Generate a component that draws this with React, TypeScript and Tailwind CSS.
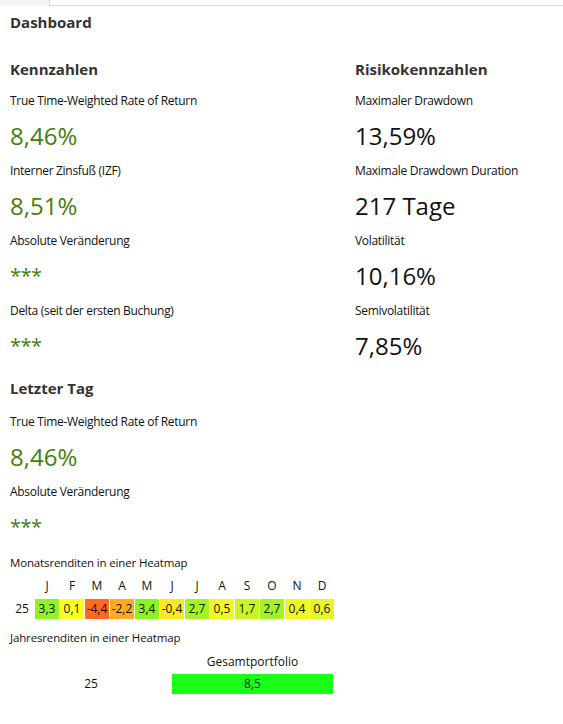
const months = ["J", "F", "M", "A", "M", "J", "J", "A", "S", "O", "N", "D"];

const monthly = [
  { value: "3,3", color: "bg-[#8cf522]" },
  { value: "0,1", color: "bg-[#fdff22]" },
  { value: "-4,4", color: "bg-[#ff6b1c]" },
  { value: "-2,2", color: "bg-[#ffab22]" },
  { value: "3,4", color: "bg-[#8af522]" },
  { value: "-0,4", color: "bg-[#ffe822]" },
  { value: "2,7", color: "bg-[#a2f522]" },
  { value: "0,5", color: "bg-[#f4f822]" },
  { value: "1,7", color: "bg-[#c6f522]" },
  { value: "2,7", color: "bg-[#a2f522]" },
  { value: "0,4", color: "bg-[#f0f822]" },
  { value: "0,6", color: "bg-[#e6f622]" },
];

function Heading({ children }: { children: string }) {
  return (
    <h2 className="text-[15px] font-bold leading-[20px] text-[#333]">
      {children}
    </h2>
  );
}

function MetricList({
  items,
  tone,
  className = "pt-[14px]",
}: {
  items: { label: string; value: string }[];
  tone?: "green" | "dark";
  className?: string;
}) {
  return (
    <div className={"flex flex-col gap-[11px] " + className}>
      {items.map((item) => {
        const masked = item.value === "***";
        return (
          <div key={item.label}>
            <p className="text-[12px] leading-[16px] tracking-[-0.3px] text-[#111]">
              {item.label}
            </p>
            <p
              className={
                "mt-[11px] leading-[32px] " +
                (masked ? "text-[20px] tracking-[-0.5px] " : "text-[24px] ") +
                (tone === "dark" ? "text-[#111]" : "text-[#44800a]")
              }
            >
              {item.value}
            </p>
          </div>
        );
      })}
    </div>
  );
}

export default function App() {
  return (
    <div
      className="min-h-[724px] bg-white text-[#111]"
      style={{ fontFamily: '"Open Sans", "Noto Sans", sans-serif' }}
    >
      <div className="flex h-[6px]">
        <div className="w-[49px] bg-[#f5f7f6]" />
        <div className="flex-1 border-b border-l border-[#dcdcdc]" />
      </div>

      <div className="px-[10px]">
        <h1 className="mt-[6px] text-[15px] font-bold leading-[20px] text-[#333]">
          Dashboard
        </h1>

        <div className="mt-[27px] grid grid-cols-[345px_1fr]">
          <section>
            <Heading>Kennzahlen</Heading>
            <MetricList
              items={[
                { label: "True Time-Weighted Rate of Return", value: "8,46%" },
                { label: "Interner Zinsfuß (IZF)", value: "8,51%" },
                { label: "Absolute Veränderung", value: "***" },
                { label: "Delta (seit der ersten Buchung)", value: "***" },
              ]}
            />
          </section>
          <section>
            <Heading>Risikokennzahlen</Heading>
            <MetricList
              tone="dark"
              items={[
                { label: "Maximaler Drawdown", value: "13,59%" },
                { label: "Maximale Drawdown Duration", value: "217 Tage" },
                { label: "Volatilität", value: "10,16%" },
                { label: "Semivolatilität", value: "7,85%" },
              ]}
            />
          </section>
        </div>

        <section className="mt-[16px]">
          <Heading>Letzter Tag</Heading>
          <MetricList
            className="pt-[16px]"
            items={[
              { label: "True Time-Weighted Rate of Return", value: "8,46%" },
              { label: "Absolute Veränderung", value: "***" },
            ]}
          />
        </section>

        <section className="mt-[12px] text-[12px] leading-[16px] text-[#111]">
          <p className="text-[11.5px] tracking-[-0.15px]">
            Monatsrenditen in einer Heatmap
          </p>
          <div className="mt-[7px] grid grid-cols-[repeat(13,24px)] gap-x-px gap-y-[5px]">
            <span />
            {months.map((m, i) => (
              <span key={i} className="text-center">
                {m}
              </span>
            ))}
            <span className="flex h-[20px] items-center justify-center">
              25
            </span>
            {monthly.map((c, i) => (
              <span
                key={i}
                className={
                  "flex h-[20px] items-center justify-center " + c.color
                }
              >
                {c.value}
              </span>
            ))}
          </div>

          <p className="mt-[11px] text-[11.5px] tracking-[-0.15px]">
            Jahresrenditen in einer Heatmap
          </p>
          <div className="mt-[8px] grid grid-cols-[162px_161px] gap-y-[4px]">
            <span />
            <span className="text-center">Gesamtportfolio</span>
            <span className="flex h-[20px] items-center justify-center">
              25
            </span>
            <span className="flex h-[20px] items-center justify-center bg-[#1aff1a]">
              8,5
            </span>
          </div>
        </section>
      </div>
    </div>
  );
}
